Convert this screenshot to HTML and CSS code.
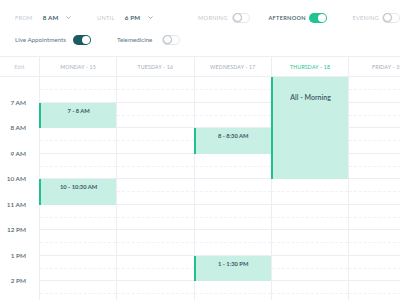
FILE: index.html
```html
<!DOCTYPE html>
<html>
<head>
<meta charset="utf-8">
<link rel="stylesheet" href="styles.css">
</head>
<body>
<div class="page">
  <div class="toolbar">
    <div class="row">
      <span class="lbl w-from">FROM</span>
      <span class="val w-val">8 AM</span>
      <span class="chev w-chev1"><svg width="5" height="3" viewBox="0 0 5 3"><polyline points="0.5,0.5 2.5,2.5 4.5,0.5" fill="none" stroke="#8a9aa6" stroke-width="0.8"/></svg></span>
      <span class="lbl w-until">UNTIL</span>
      <span class="val w-val">6 PM</span>
      <span class="chev w-chev2"><svg width="5" height="3" viewBox="0 0 5 3"><polyline points="0.5,0.5 2.5,2.5 4.5,0.5" fill="none" stroke="#8a9aa6" stroke-width="0.8"/></svg></span>
      <span class="lbl w-morning">MORNING</span>
      <span class="toggle off gap-morning"><span class="knob"></span></span>
      <span class="lbl on-lbl w-afternoon">AFTERNOON</span>
      <span class="toggle green gap-afternoon"><span class="knob"></span></span>
      <span class="lbl w-evening">EVENING</span>
      <span class="toggle off"><span class="knob"></span></span>
    </div>
    <div class="row">
      <span class="txt w-live">Live Appointments</span>
      <span class="toggle dark gap-live"><span class="knob"></span></span>
      <span class="txt w-tele">Telemedicine</span>
      <span class="toggle off"><span class="knob"></span></span>
    </div>
  </div>

  <div class="calendar">
    <div class="head">
      <div class="hcell edit">Edit</div>
      <div class="hcell day">MONDAY - 15</div>
      <div class="hcell day">TUESDAY - 16</div>
      <div class="hcell day">WEDNESDAY - 17</div>
      <div class="hcell day today">THURSDAY - 18</div>
      <div class="hcell day">FRIDAY - 19</div>
    </div>
    <div class="body">
      <div class="times">
        <div class="time">7 AM</div>
        <div class="time">8 AM</div>
        <div class="time">9 AM</div>
        <div class="time">10 AM</div>
        <div class="time">11 AM</div>
        <div class="time">12 PM</div>
        <div class="time">1 PM</div>
        <div class="time">2 PM</div>
      </div>
      <div class="col">
        <div class="slot"></div>
        <div class="slot"><div class="event h1">7 - 8 AM</div></div>
        <div class="slot"></div>
        <div class="slot"></div>
        <div class="slot"><div class="event h1">10 - 10:30 AM</div></div>
        <div class="slot"></div>
        <div class="slot"></div>
        <div class="slot"></div>
        <div class="slot"></div>
      </div>
      <div class="col">
        <div class="slot"></div><div class="slot"></div><div class="slot"></div>
        <div class="slot"></div><div class="slot"></div><div class="slot"></div>
        <div class="slot"></div><div class="slot"></div><div class="slot"></div>
      </div>
      <div class="col">
        <div class="slot"></div>
        <div class="slot"></div>
        <div class="slot"><div class="event h1">8 - 8:30 AM</div></div>
        <div class="slot"></div>
        <div class="slot"></div>
        <div class="slot"></div>
        <div class="slot"></div>
        <div class="slot"><div class="event h1">1 - 1:30 PM</div></div>
        <div class="slot"></div>
      </div>
      <div class="col">
        <div class="slot"><div class="event h4 big">All - Morning</div></div>
        <div class="slot"></div><div class="slot"></div><div class="slot"></div>
        <div class="slot"></div><div class="slot"></div><div class="slot"></div>
        <div class="slot"></div><div class="slot"></div>
      </div>
      <div class="col">
        <div class="slot"></div><div class="slot"></div><div class="slot"></div>
        <div class="slot"></div><div class="slot"></div><div class="slot"></div>
        <div class="slot"></div><div class="slot"></div><div class="slot"></div>
      </div>
    </div>
  </div>
</div>
</body>
</html>
```

FILE: styles.css
```css
* { box-sizing: border-box; }
html, body { margin: 0; padding: 0; background: #fff; }
body {
  width: 400px;
  height: 300px;
  overflow: hidden;
  font-family: Lato, "Open Sans", sans-serif;
}
.page { width: 400px; }

.toolbar { padding: 12px 0 0 15px; }
.row {
  display: flex;
  align-items: center;
  height: 11px;
  margin-bottom: 11px;
  white-space: nowrap;
}
.lbl {
  font-size: 5.6px;
  letter-spacing: 0.3px;
  color: #c2c8cf;
}
.on-lbl { color: #3e5b68; font-weight: 600; }
.val {
  font-size: 6.2px;
  font-weight: 700;
  color: #3f5f6d;
  letter-spacing: 0.2px;
}
.txt { font-size: 6.2px; color: #5e7482; }
.chev { display: flex; align-items: center; height: 11px; }
.chev svg { display: block; }

.w-from { width: 29px; }
.w-until { width: 29px; }
.w-val { width: 24px; }
.w-chev1 { width: 33px; }
.w-chev2 { width: 53px; }
.w-morning { width: 36px; }
.w-afternoon { width: 43px; }
.w-evening { width: 31px; }
.gap-morning { margin-right: 18px; }
.gap-afternoon { margin-right: 25px; }
.w-live { width: 58px; }
.w-tele { width: 45px; }
.gap-live { margin-right: 26px; }

.toggle {
  position: relative;
  flex: none;
  width: 18px;
  height: 10px;
  border-radius: 5px;
}
.toggle .knob {
  position: absolute;
  top: 1px;
  width: 8px;
  height: 8px;
  border-radius: 50%;
  background: #fff;
}
.toggle.off { background: #fff; border: 1px solid #e4e7eb; }
.toggle.off .knob {
  top: -0.5px;
  left: -0.5px;
  width: 9px;
  height: 9px;
  border: 1px solid #b9c0c7;
  box-shadow: 0 0.5px 1px rgba(0,0,0,0.15);
}
.toggle.green { background: #21c38e; }
.toggle.dark { background: #1d5b64; }
.toggle.green .knob, .toggle.dark .knob { right: 1px; }

.calendar { border-top: 1px solid #eceef4; }
.head, .body {
  display: grid;
  grid-template-columns: 39px repeat(5, 77.3px);
}
.head {
  height: 20px;
  border-bottom: 1px solid #eceef4;
}
.hcell {
  display: flex;
  align-items: center;
  justify-content: center;
  font-size: 5.2px;
  letter-spacing: 0.2px;
  color: #a3abb8;
  white-space: nowrap;
}
.hcell.day { border-left: 1px solid #eceef4; }
.hcell.edit { color: #c3c8d0; font-size: 5.6px; }
.hcell.today { color: #21c38e; }

.times { padding-top: 21.5px; }
.time {
  height: 25.5px;
  line-height: 8px;
  text-align: right;
  padding-right: 13px;
  font-size: 6.4px;
  font-weight: 600;
  color: #4d6170;
  white-space: nowrap;
}
.col { border-left: 1px solid #eceef4; }
.slot {
  position: relative;
  height: 25.5px;
  border-bottom: 1px solid #eceef4;
}
.slot::after {
  content: "";
  position: absolute;
  left: 0;
  right: 0;
  top: 12px;
  border-top: 1px dashed #f1f2f6;
}
.event {
  position: absolute;
  z-index: 1;
  top: 0;
  left: -1px;
  right: 0;
  background: #c7efe3;
  border-left: 2px solid #1fc08b;
  text-align: center;
  font-size: 5.8px;
  font-weight: 700;
  color: #3d5763;
  padding-top: 4px;
  white-space: nowrap;
}
.event.h1 { height: 25.5px; }
.event.h4 { height: 102px; }
.event.big { font-size: 7px; font-weight: 600; padding-top: 16px; }
```
